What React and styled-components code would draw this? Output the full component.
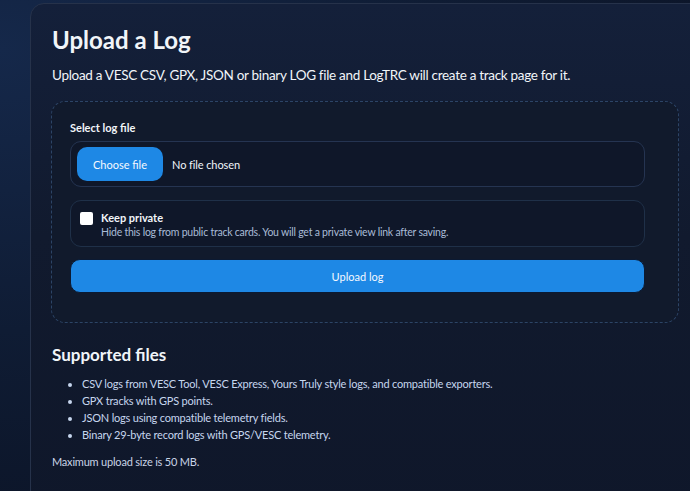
import styled, { createGlobalStyle } from 'styled-components'

const Global = createGlobalStyle`
  html, body {
    margin: 0;
    padding: 0;
    height: 100%;
    overflow: hidden;
  }
  body {
    background: radial-gradient(ellipse at 0% 10%, #15284a 0%, #0f1c34 45%, #0a1020 100%);
    font-family: Lato, "Open Sans", Arial, sans-serif;
    color: #f1f5f9;
  }
`

const Page = styled.div`
  padding: 3px 0 0 30px;
  height: 100vh;
  box-sizing: border-box;
`

const Card = styled.section`
  width: 720px;
  min-height: 520px;
  box-sizing: border-box;
  padding: 20px 20px;
  border: 1px solid #26324a;
  border-radius: 14px;
  background: linear-gradient(180deg, #14203a 0%, #111a2e 45%, #0f172a 100%);
`

const Title = styled.h1`
  margin: 0;
  padding-left: 1px;
  font-size: 24px;
  font-weight: 700;
  line-height: 31px;
`

const Lead = styled.p`
  margin: 10px 0 0;
  padding-left: 1px;
  font-size: 13.5px;
  letter-spacing: -0.3px;
  line-height: 20px;
`

const DropZone = styled.form`
  margin-top: 16px;
  width: 628px;
  box-sizing: border-box;
  padding: 18px 18px 29px;
  border: 1px dashed #2c4466;
  border-radius: 14px;
  background: #111a2c;
`

const Inner = styled.div`
  width: 575px;
`

const Label = styled.div`
  font-size: 11px;
  font-weight: 700;
  line-height: 16px;
  margin-bottom: 5px;
`

const Field = styled.div`
  display: flex;
  align-items: center;
  gap: 9px;
  height: 46px;
  box-sizing: border-box;
  padding: 0 6px;
  border: 1px solid #253451;
  border-radius: 11px;
  background: #0f1729;
`

const ChooseButton = styled.button`
  height: 34px;
  width: 86px;
  padding: 0;
  border: none;
  border-radius: 10px;
  background: #1e88e5;
  color: #f5f9ff;
  font-family: inherit;
  font-size: 11px;
`

const FileName = styled.span`
  font-size: 11px;
  letter-spacing: -0.1px;
`

const PrivateRow = styled.label`
  display: flex;
  align-items: flex-start;
  gap: 8px;
  margin-top: 13px;
  height: 47px;
  box-sizing: border-box;
  padding: 9px 9px 0;
  border: 1px solid #1f3048;
  border-radius: 11px;
  background: #0f1729;
`

const Check = styled.span`
  width: 13px;
  height: 13px;
  margin-top: 2px;
  border-radius: 2px;
  background: #ffffff;
  flex-shrink: 0;
`

const PrivateTitle = styled.div`
  font-size: 11px;
  font-weight: 700;
  line-height: 15px;
`

const PrivateHint = styled.div`
  font-size: 10.5px;
  letter-spacing: -0.23px;
  line-height: 15px;
  color: #a9bbd6;
`

const UploadButton = styled.button`
  display: block;
  width: 100%;
  height: 34px;
  margin-top: 12px;
  border: 1px solid #0b1a33;
  border-radius: 10px;
  background: #1e88e5;
  color: #f5f9ff;
  font-family: inherit;
  font-size: 11px;
`

const Heading = styled.h2`
  margin: 21px 0 0;
  padding-left: 1px;
  font-size: 17px;
  font-weight: 700;
  line-height: 22px;
`

const List = styled.ul`
  margin: 9px 0 0;
  padding-left: 31px;
  list-style: disc;
`

const Item = styled.li`
  font-size: 11px;
  letter-spacing: -0.2px;
  line-height: 17px;
  color: #c6d6ee;
`

const Note = styled.p`
  margin: 10px 0 0;
  padding-left: 1px;
  font-size: 11px;
  letter-spacing: -0.2px;
  line-height: 17px;
  color: #c9d4e6;
`

const formats = [
  'CSV logs from VESC Tool, VESC Express, Yours Truly style logs, and compatible exporters.',
  'GPX tracks with GPS points.',
  'JSON logs using compatible telemetry fields.',
  'Binary 29-byte record logs with GPS/VESC telemetry.',
]

const App = () => {
  return (
    <Page>
      <Global />
      <Card>
        <Title>Upload a Log</Title>
        <Lead>
          Upload a VESC CSV, GPX, JSON or binary LOG file and LogTRC will create a track page for it.
        </Lead>
        <DropZone onSubmit={(e) => e.preventDefault()}>
          <Inner>
            <Label>Select log file</Label>
            <Field>
              <ChooseButton type="button">Choose file</ChooseButton>
              <FileName>No file chosen</FileName>
            </Field>
            <PrivateRow>
              <Check />
              <div>
                <PrivateTitle>Keep private</PrivateTitle>
                <PrivateHint>
                  Hide this log from public track cards. You will get a private view link after saving.
                </PrivateHint>
              </div>
            </PrivateRow>
            <UploadButton type="submit">Upload log</UploadButton>
          </Inner>
        </DropZone>
        <Heading>Supported files</Heading>
        <List>
          {formats.map((f) => (
            <Item key={f}>{f}</Item>
          ))}
        </List>
        <Note>Maximum upload size is 50 MB.</Note>
      </Card>
    </Page>
  )
}

export default App
